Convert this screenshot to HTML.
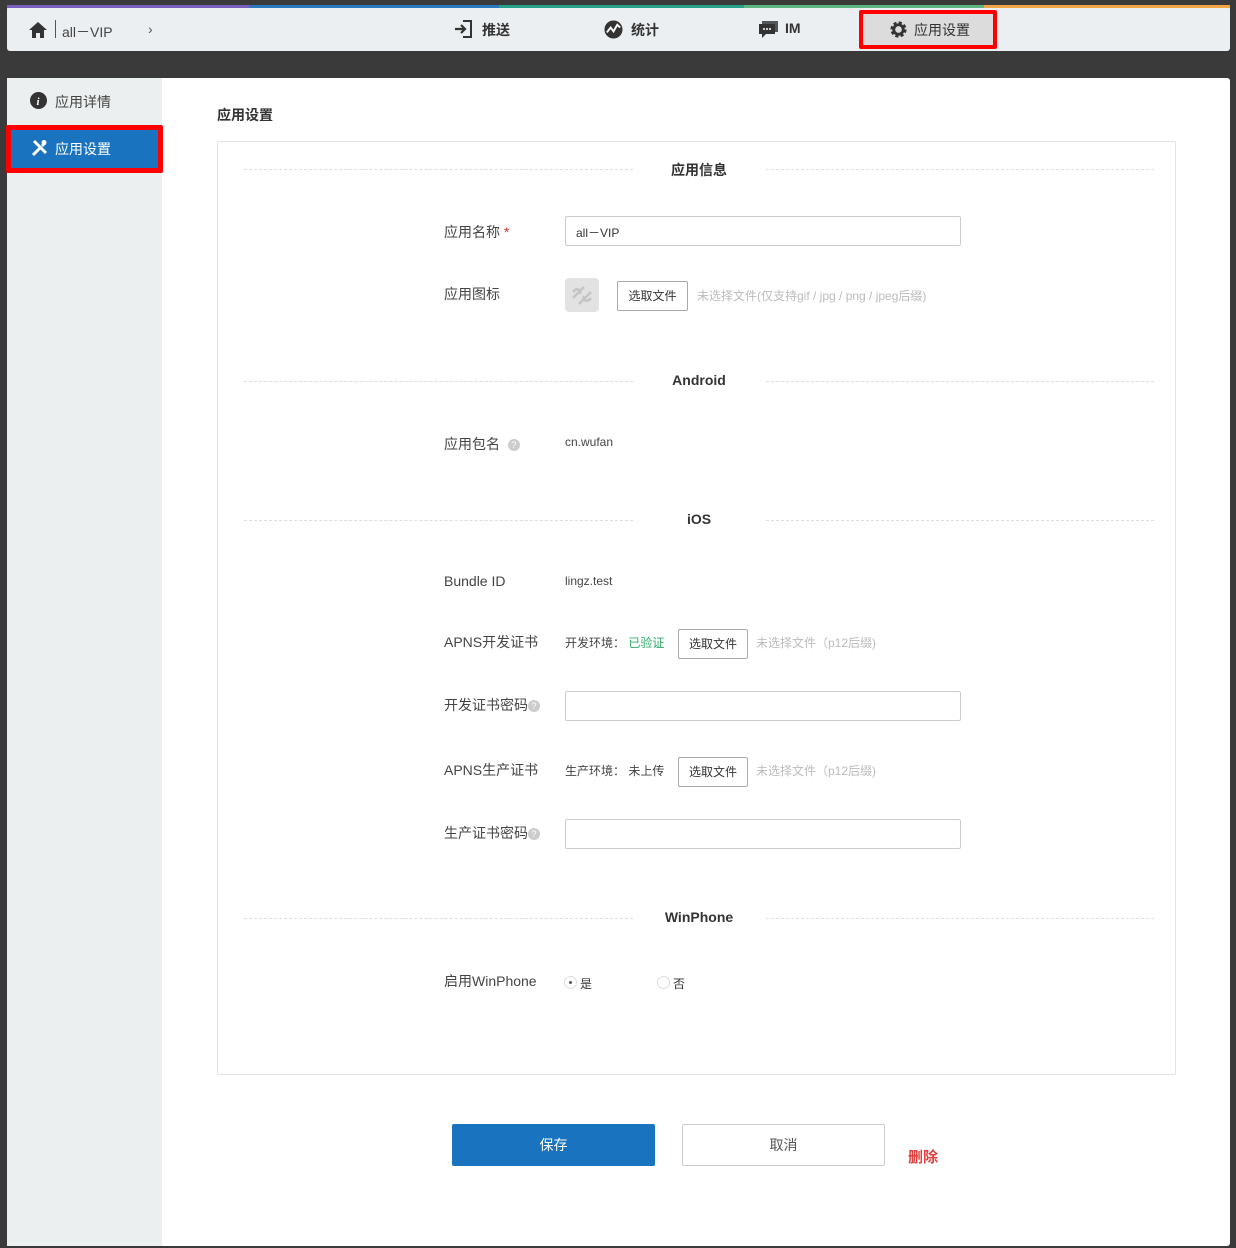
<!DOCTYPE html>
<html><head><meta charset="utf-8"><style>
*{margin:0;padding:0;box-sizing:border-box}
body{width:1236px;height:1248px;background:#3a3a3a;position:relative;overflow:hidden;font-family:"Liberation Sans","Noto Sans CJK SC",sans-serif;color:#333;font-size:13px}
.a{position:absolute}
.top{left:7px;top:6px;width:1223px;height:45px;background:#eceff1;border-radius:3px}
.strip{left:7px;top:5px;height:3px}
.nav{top:20px;font-size:14px;font-weight:bold;color:#333}
.main{left:7px;top:78px;width:1223px;height:1168px;background:#fff;border-radius:3px}
.side{left:7px;top:78px;width:155px;height:1168px;background:#ecefef}
.box{left:217px;top:141px;width:959px;height:934px;border:1px solid #e3e3e3;border-radius:2px}
.dl{height:0;border-top:1px dashed #ddd}
.sh{font-size:14px;font-weight:bold;color:#333;width:200px;text-align:center;left:599px}
.lb{left:444px;font-size:14px;color:#444}
.inp{left:565px;width:396px;height:30px;border:1px solid #ccc;border-radius:2px;background:#fff;font-size:12px;padding:7px 10px}
.btn{height:30px;border:1px solid #aaa;border-radius:2px;background:#fff;font-size:12px;text-align:center;line-height:28px;color:#333}
.hint{font-size:12px;color:#bbb}
.q{display:inline-block;width:12px;height:12px;border-radius:50%;background:#ccc;color:#fff;font-size:9px;text-align:center;line-height:12px;vertical-align:middle}
</style></head><body>
<div class="a top"></div>
<div class="a strip" style="width:242px;background:#7a5fc0"></div>
<div class="a strip" style="left:249px;width:250px;background:#2a78c0"></div>
<div class="a strip" style="left:499px;width:245px;background:#27a08a"></div>
<div class="a strip" style="left:744px;width:240px;background:#5cb880"></div>
<div class="a strip" style="left:984px;width:246px;background:#f0a646"></div>
<svg class="a" style="left:28px;top:21px" width="20" height="18" viewBox="0 0 20 18"><path d="M10 1L1 9h3v8h4v-5h4v5h4V9h3z" fill="#333"/></svg>
<div class="a" style="left:55px;top:20px;width:1px;height:18px;background:#555"></div>
<div class="a" style="left:62px;top:22px;font-size:14px;color:#444">all－VIP</div>
<div class="a" style="left:148px;top:21px;font-size:14px;color:#555">›</div>
<svg class="a" style="left:454px;top:19px" width="20" height="20" viewBox="0 0 20 20"><path d="M1 10h9M7 6l4 4-4 4" stroke="#333" stroke-width="2.2" fill="none"/><path d="M9 2h8v16h-8" stroke="#333" stroke-width="2" fill="none"/></svg>
<div class="a nav" style="left:482px">推送</div>
<svg class="a" style="left:604px;top:20px" width="19" height="19" viewBox="0 0 20 20"><circle cx="10" cy="10" r="9.5" fill="#333"/><path d="M3 13l4-5 3 4 4-7 3 3" stroke="#fff" stroke-width="2" fill="none"/></svg>
<div class="a nav" style="left:631px">统计</div>
<svg class="a" style="left:759px;top:21px" width="20" height="18" viewBox="0 0 20 18"><rect x="3" y="0" width="16" height="11" fill="#555"/><rect x="0" y="3" width="16" height="10" fill="#333"/><path d="M3 13v4l4-4z" fill="#333"/><circle cx="5" cy="8" r="1" fill="#fff"/><circle cx="8" cy="8" r="1" fill="#fff"/><circle cx="11" cy="8" r="1" fill="#fff"/></svg>
<div class="a nav" style="left:785px">IM</div>
<div class="a" style="left:859px;top:10px;width:138px;height:39px;background:#dcdcdc;border:4px solid #f00;border-radius:2px"></div>
<svg class="a" style="left:889px;top:20px" width="19" height="19" viewBox="0 0 20 20"><circle cx="10" cy="10" r="6.5" fill="none" stroke="#333" stroke-width="4" stroke-dasharray="3 2.1"/><circle cx="10" cy="10" r="5" fill="none" stroke="#333" stroke-width="3"/></svg>
<div class="a nav" style="left:914px;font-weight:normal">应用设置</div>

<div class="a main"></div>
<div class="a side"></div>
<svg class="a" style="left:30px;top:92px" width="17" height="17" viewBox="0 0 17 17"><circle cx="8.5" cy="8.5" r="8.5" fill="#333"/><text x="6.5" y="13" font-size="11" font-style="italic" font-weight="bold" fill="#fff" font-family="Liberation Serif">i</text></svg>
<div class="a" style="left:55px;top:92px;font-size:14px;color:#444">应用详情</div>
<div class="a" style="left:6px;top:125px;width:157px;height:48px;border:5px solid #f00;background:#1a73bf;border-radius:2px"></div>
<svg class="a" style="left:30px;top:139px" width="18" height="18" viewBox="0 0 18 18"><path d="M3 16L10 9M12 7l3-3" stroke="#fff" stroke-width="3"/><path d="M4 2l12 12" stroke="#fff" stroke-width="3"/><circle cx="14" cy="3.5" r="2.5" fill="#fff"/></svg>
<div class="a" style="left:55px;top:139px;font-size:14px;color:#fff">应用设置</div>

<div class="a" style="left:217px;top:105px;font-size:14px;font-weight:bold;color:#333">应用设置</div>
<div class="a box"></div>

<div class="a dl" style="left:244px;top:169px;width:389px"></div><div class="a dl" style="left:766px;top:169px;width:388px"></div>
<div class="a sh" style="top:160px">应用信息</div>
<div class="a lb" style="top:222px">应用名称 <span style="color:#d33">*</span></div>
<div class="a inp" style="top:216px">all－VIP</div>
<div class="a lb" style="top:284px">应用图标</div>
<div class="a" style="left:565px;top:278px;width:34px;height:34px;background:#e2e2e2;border-radius:4px"></div>
<svg class="a" style="left:569px;top:283px" width="26" height="24" viewBox="0 0 26 24"><path d="M4 15L15 4M10 21L22 9M4 9c4-5 9-2 7 2M22 15c-4 5-9 2-7-2" stroke="#c4c4c4" stroke-width="2.5" fill="none"/></svg>
<div class="a btn" style="left:617px;top:281px;width:71px">选取文件</div>
<div class="a hint" style="left:697px;top:287px">未选择文件(仅支持gif / jpg / png / jpeg后缀)</div>

<div class="a dl" style="left:244px;top:381px;width:389px"></div><div class="a dl" style="left:766px;top:381px;width:388px"></div>
<div class="a sh" style="top:372px">Android</div>
<div class="a lb" style="top:434px">应用包名 &nbsp;<span class="q">?</span></div>
<div class="a" style="left:565px;top:435px;font-size:12px;color:#444">cn.wufan</div>

<div class="a dl" style="left:244px;top:520px;width:389px"></div><div class="a dl" style="left:766px;top:520px;width:388px"></div>
<div class="a sh" style="top:511px">iOS</div>
<div class="a lb" style="top:573px">Bundle ID</div>
<div class="a" style="left:565px;top:574px;font-size:12px;color:#444">lingz.test</div>
<div class="a lb" style="top:632px">APNS开发证书</div>
<div class="a" style="left:565px;top:634px;font-size:12px;color:#444">开发环境：&nbsp;<span style="color:#2eaa6a">已验证</span></div>
<div class="a btn" style="left:678px;top:629px;width:70px">选取文件</div>
<div class="a hint" style="left:756px;top:634px">未选择文件（p12后缀)</div>
<div class="a lb" style="top:695px">开发证书密码<span class="q">?</span></div>
<div class="a inp" style="top:691px"></div>
<div class="a lb" style="top:760px">APNS生产证书</div>
<div class="a" style="left:565px;top:762px;font-size:12px;color:#444">生产环境：&nbsp;未上传</div>
<div class="a btn" style="left:678px;top:757px;width:70px">选取文件</div>
<div class="a hint" style="left:756px;top:762px">未选择文件（p12后缀)</div>
<div class="a lb" style="top:823px">生产证书密码<span class="q">?</span></div>
<div class="a inp" style="top:819px"></div>

<div class="a dl" style="left:244px;top:918px;width:389px"></div><div class="a dl" style="left:766px;top:918px;width:388px"></div>
<div class="a sh" style="top:909px">WinPhone</div>
<div class="a lb" style="top:971px">启用WinPhone</div>
<div class="a" style="left:564px;top:976px;width:13px;height:13px;border:1px solid #ddd;border-radius:50%"><div style="width:3px;height:3px;background:#555;border-radius:50%;margin:4px"></div></div>
<div class="a" style="left:580px;top:975px;font-size:12px">是</div>
<div class="a" style="left:657px;top:976px;width:13px;height:13px;border:1px solid #ddd;border-radius:50%"></div>
<div class="a" style="left:673px;top:975px;font-size:12px">否</div>

<div class="a" style="left:452px;top:1124px;width:203px;height:42px;background:#1a73bf;border-radius:2px;color:#fff;font-size:14px;text-align:center;line-height:42px">保存</div>
<div class="a" style="left:682px;top:1124px;width:203px;height:42px;border:1px solid #ccc;border-radius:2px;color:#555;font-size:14px;text-align:center;line-height:40px">取消</div>
<div class="a" style="left:908px;top:1146px;font-size:15px;font-weight:bold;color:#e0413f">删除</div>
</body></html>
